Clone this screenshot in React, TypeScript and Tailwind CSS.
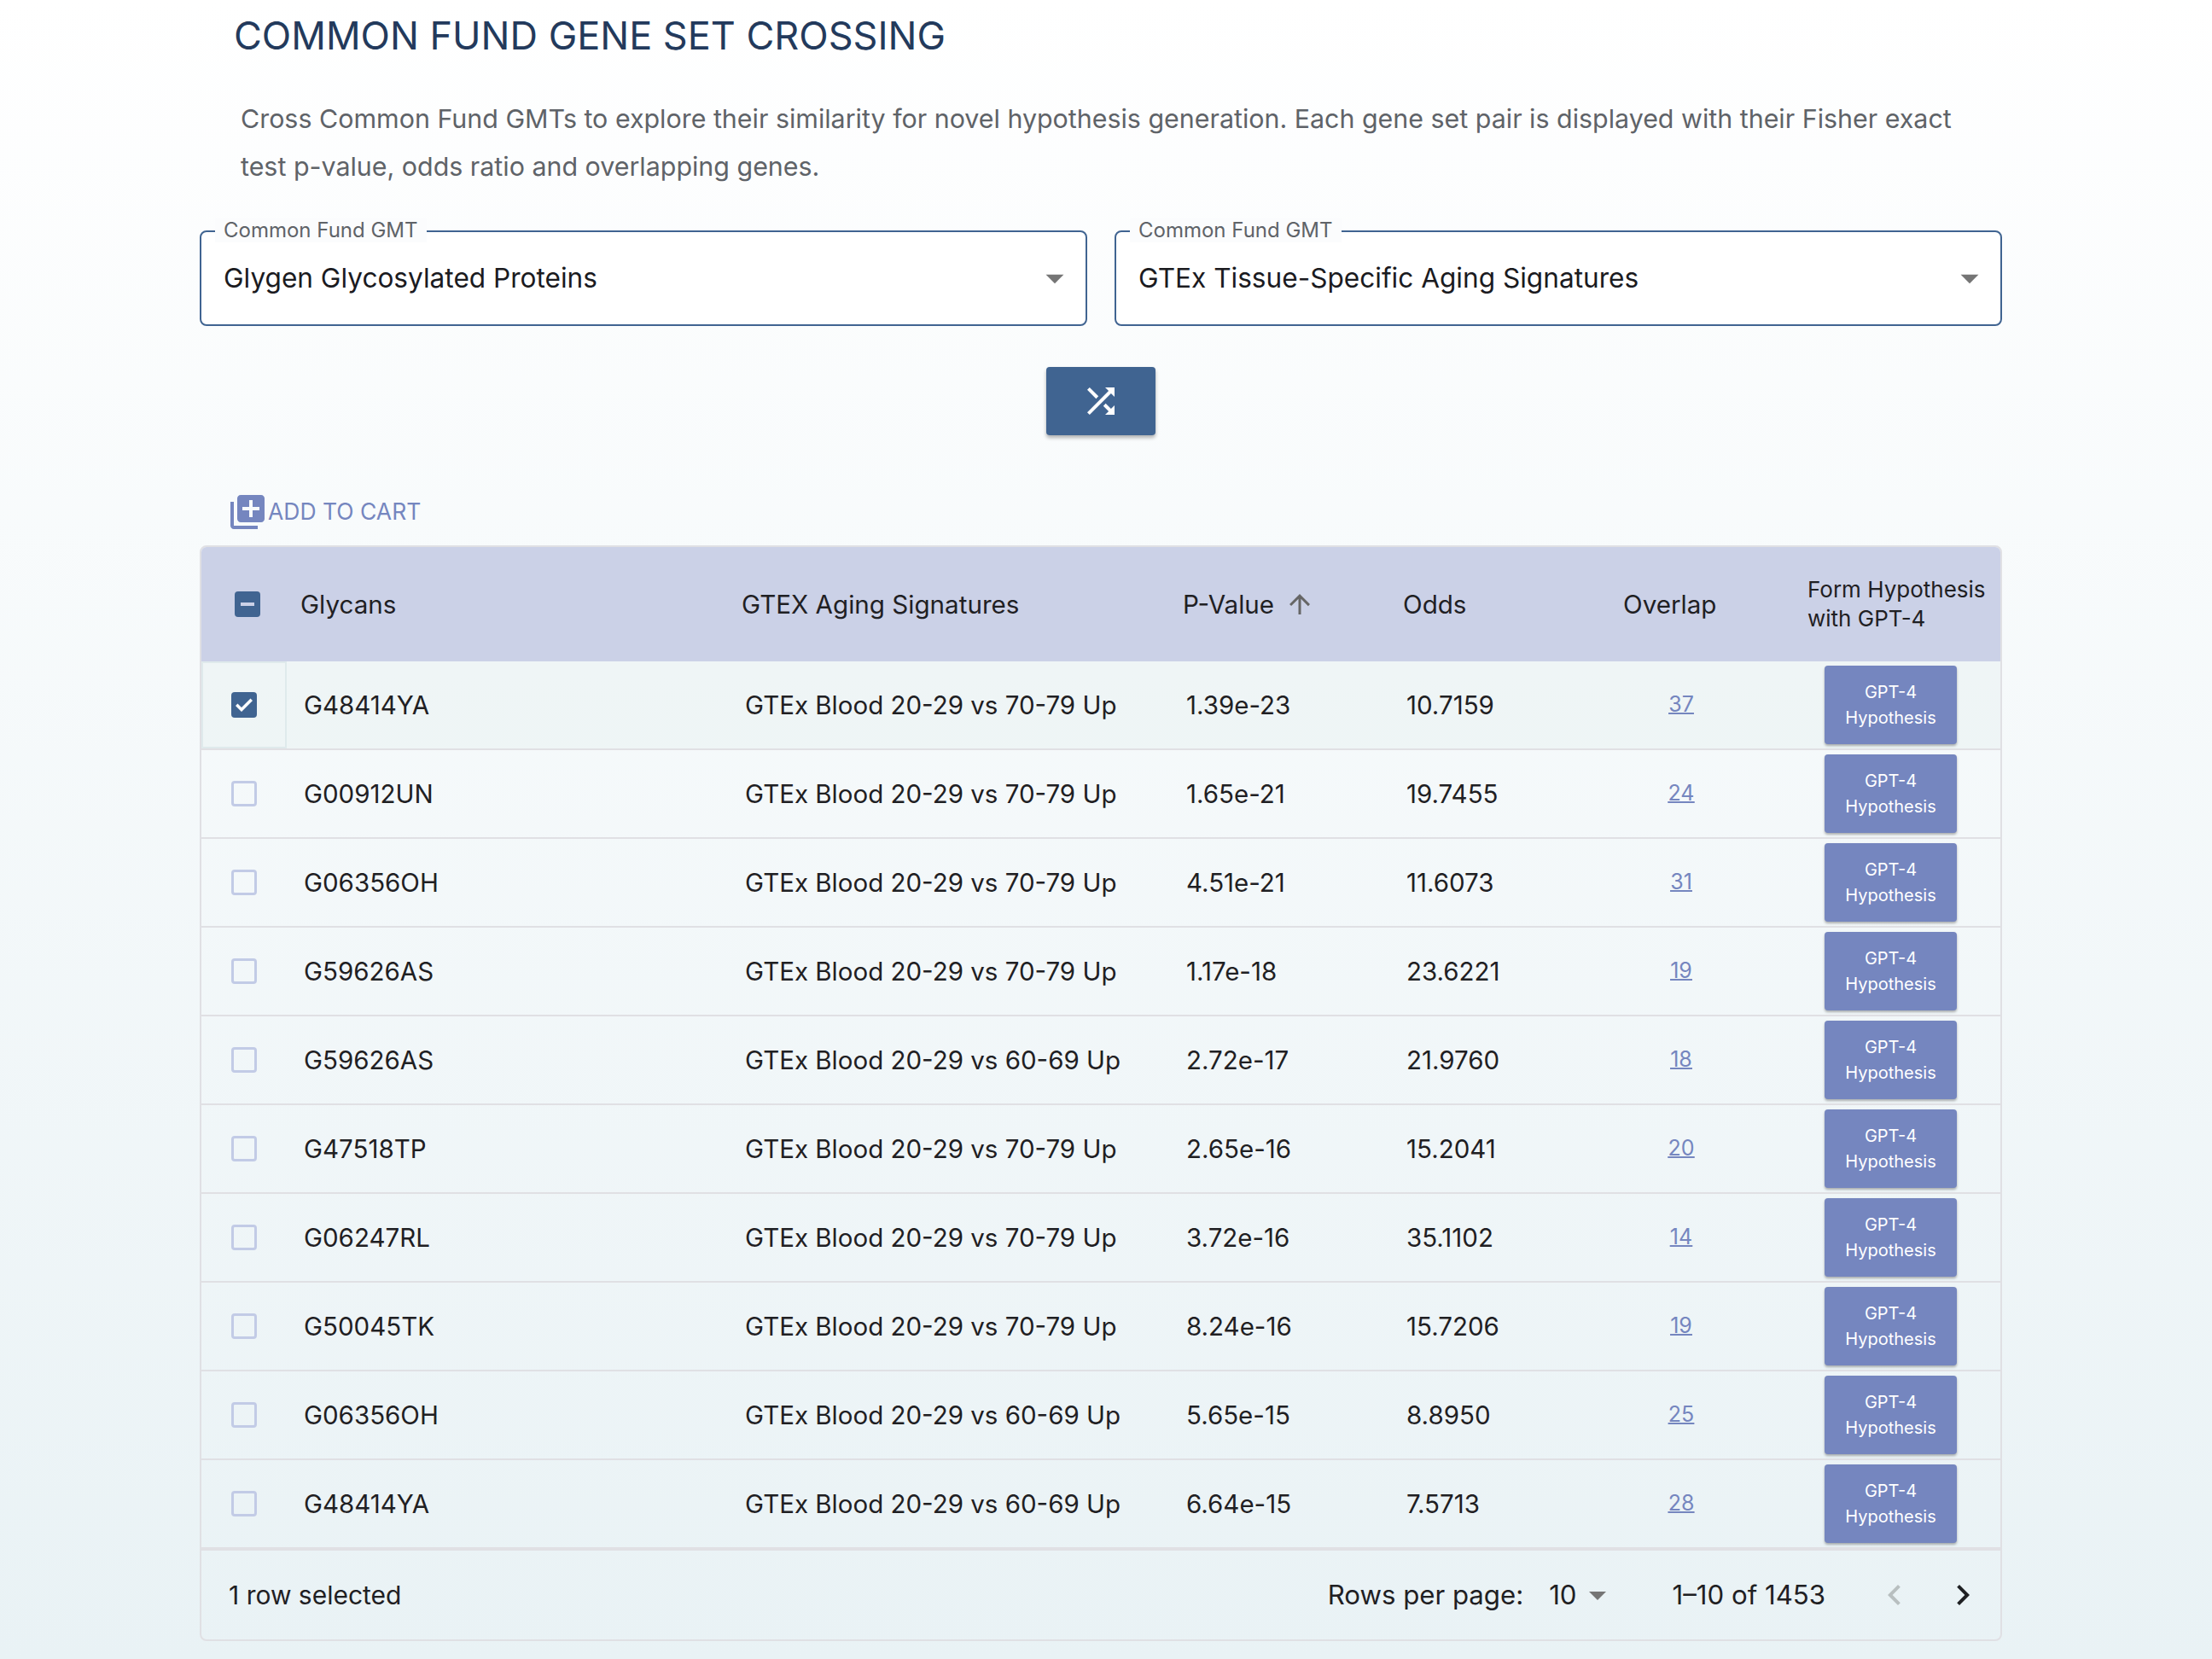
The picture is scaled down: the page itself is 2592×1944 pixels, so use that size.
import { ReactNode } from 'react';

interface Row {
  glycan: string;
  signature: string;
  pValue: string;
  odds: string;
  overlap: number;
  selected?: boolean;
}

const rows: Row[] = [
  { glycan: 'G48414YA', signature: 'GTEx Blood 20-29 vs 70-79 Up', pValue: '1.39e-23', odds: '10.7159', overlap: 37, selected: true },
  { glycan: 'G00912UN', signature: 'GTEx Blood 20-29 vs 70-79 Up', pValue: '1.65e-21', odds: '19.7455', overlap: 24 },
  { glycan: 'G06356OH', signature: 'GTEx Blood 20-29 vs 70-79 Up', pValue: '4.51e-21', odds: '11.6073', overlap: 31 },
  { glycan: 'G59626AS', signature: 'GTEx Blood 20-29 vs 70-79 Up', pValue: '1.17e-18', odds: '23.6221', overlap: 19 },
  { glycan: 'G59626AS', signature: 'GTEx Blood 20-29 vs 60-69 Up', pValue: '2.72e-17', odds: '21.9760', overlap: 18 },
  { glycan: 'G47518TP', signature: 'GTEx Blood 20-29 vs 70-79 Up', pValue: '2.65e-16', odds: '15.2041', overlap: 20 },
  { glycan: 'G06247RL', signature: 'GTEx Blood 20-29 vs 70-79 Up', pValue: '3.72e-16', odds: '35.1102', overlap: 14 },
  { glycan: 'G50045TK', signature: 'GTEx Blood 20-29 vs 70-79 Up', pValue: '8.24e-16', odds: '15.7206', overlap: 19 },
  { glycan: 'G06356OH', signature: 'GTEx Blood 20-29 vs 60-69 Up', pValue: '5.65e-15', odds: '8.8950', overlap: 25 },
  { glycan: 'G48414YA', signature: 'GTEx Blood 20-29 vs 60-69 Up', pValue: '6.64e-15', odds: '7.5713', overlap: 28 },
];

function Icon({ d, className }: { d: string; className: string }) {
  return (
    <svg viewBox="0 0 24 24" fill="currentColor" className={className}>
      <path d={d} />
    </svg>
  );
}

const dropDown = 'M7 10l5 5 5-5z';

function GmtSelect({ value }: { value: string }) {
  return (
    <div className="relative flex h-[112px] flex-1 items-center justify-between rounded-lg border-2 border-[#406491] bg-white pl-[26px] pr-[11px] text-[31.6px] text-[#1b1b1f]">
      <span className="absolute left-[16px] top-[-16px] bg-[#fbfcfd] px-[10px] text-[24px] leading-[28px] text-[#5f6368]">
        Common Fund GMT
      </span>
      <span>{value}</span>
      <Icon d={dropDown} className="h-[50px] w-[50px] text-[#757575]" />
    </div>
  );
}

function Cell({ className, children }: { className: string; children: ReactNode }) {
  return <div className={`flex items-center ${className}`}>{children}</div>;
}

function TableRow({ row }: { row: Row }) {
  return (
    <div className={`flex h-[104px] items-center border-b-2 border-[#e0e0e4] text-[29.5px] text-[#1f2023] ${row.selected ? 'bg-[#dfeaec]/30' : ''}`}>
      <Cell className={`h-full w-[100px] justify-center ${row.selected ? 'border-2 border-[#dfeaec]' : ''}`}>
        {row.selected ? (
          <span className="flex h-[30px] w-[30px] items-center justify-center rounded-[4px] bg-[#406491] text-white">
            <svg viewBox="0 0 24 24" className="h-[30px] w-[30px]" fill="currentColor">
              <path d="M9.6 18.4 4 12.8l2-2 3.6 3.6L18 6l2 2z" />
            </svg>
          </span>
        ) : (
          <span className="h-[30px] w-[30px] rounded-[4px] border-[3px] border-[#c2cbe6]" />
        )}
      </Cell>
      <Cell className="w-[517px] pl-[20px]">{row.glycan}</Cell>
      <Cell className="w-[517px] pl-[20px]">{row.signature}</Cell>
      <Cell className="w-[258px] pl-[20px]">{row.pValue}</Cell>
      <Cell className="w-[258px] pl-[20px]">{row.odds}</Cell>
      <Cell className="w-[168px] justify-center text-[25px] text-[#7586bf] underline decoration-2">
        <a href="#">{row.overlap}</a>
      </Cell>
      <Cell className="flex-1 pl-[84px]">
        <button className="h-[92px] w-[155px] rounded-[4px] bg-[#7586bf] text-[20px] leading-[30px] text-white shadow-[0_2px_3px_rgba(0,0,0,0.3)]">
          GPT-4
          <br />
          Hypothesis
        </button>
      </Cell>
    </div>
  );
}

export default function App() {
  return (
    <div
      className="min-h-[1944px] bg-gradient-to-b from-white to-[#e9f2f5] pl-[234px] pr-[246px]"
      style={{ fontFamily: 'Inter, "Liberation Sans", sans-serif' }}
    >
      <h1 className="pl-[40px] pt-[14px] text-[45px] uppercase leading-[56px] text-[#233a5c]">
        Common Fund Gene Set Crossing
      </h1>
      <p className="mb-[47px] ml-[48px] mt-[41px] w-[2050px] text-[30.4px] leading-[56px] text-[#5f6368]">
        Cross Common Fund GMTs to explore their similarity for novel hypothesis generation. Each gene set pair is displayed with their Fisher exact test p-value, odds ratio and overlapping genes.
      </p>

      <div className="flex gap-[32px]">
        <GmtSelect value="Glygen Glycosylated Proteins" />
        <GmtSelect value="GTEx Tissue-Specific Aging Signatures" />
      </div>

      <div className="mt-[48px] flex justify-center">
        <button className="flex h-[80px] w-[128px] items-center justify-center rounded-[4px] bg-[#406491] text-white shadow-[0_3px_4px_rgba(0,0,0,0.3)]">
          <Icon
            d="M10.59 9.17 5.41 4 4 5.41l5.17 5.17 1.42-1.41zM14.5 4l2.04 2.04L4 18.59 5.41 20 17.96 7.46 20 9.5V4h-5.5zm.33 9.41-1.41 1.41 3.13 3.13L14.5 20H20v-5.5l-2.04 2.04-3.13-3.13z"
            className="h-[48px] w-[48px]"
          />
        </button>
      </div>

      <div className="mb-[14px] ml-[32px] mt-[65px] flex h-[50px] items-center text-[26.5px] uppercase text-[#7586bf]">
        <Icon
          d="M4 6H2v14c0 1.1.9 2 2 2h14v-2H4V6zm16-4H8c-1.1 0-2 .9-2 2v12c0 1.1.9 2 2 2h12c1.1 0 2-.9 2-2V4c0-1.1-.9-2-2-2zm-1 9h-4v4h-2v-4H9V9h4V5h2v4h4v2z"
          className="h-[48px] w-[48px]"
        />
        <span>Add to cart</span>
      </div>

      <div className="overflow-hidden rounded-lg border-2 border-[#e0e0e4]">
        <div className="flex h-[134px] items-center bg-[#cbd1e7] text-[29.6px] text-[#1f2023]">
          <Cell className="h-full w-[108px] justify-center">
            <span className="flex h-[30px] w-[30px] items-center justify-center rounded-[4px] bg-[#406491]">
              <span className="h-[4px] w-[16px] bg-[#cbd1e7]" />
            </span>
          </Cell>
          <Cell className="w-[517px] pl-[8px]">Glycans</Cell>
          <Cell className="w-[517px] pl-[8px]">GTEX Aging Signatures</Cell>
          <Cell className="w-[258px] pl-[8px]">
            P-Value
            <Icon d="M4 12l1.41 1.41L11 7.83V20h2V7.83l5.58 5.59L20 12l-8-8-8 8z" className="ml-[12px] h-[36px] w-[36px] text-[#666]" />
          </Cell>
          <Cell className="w-[258px] pl-[8px]">Odds</Cell>
          <Cell className="w-[224px] pl-[8px]">Overlap</Cell>
          <Cell className="flex-1 text-[26px] leading-[34px]">
            <span>
              Form Hypothesis
              <br />
              with GPT-4
            </span>
          </Cell>
        </div>

        {rows.map((row, i) => (
          <TableRow key={i} row={row} />
        ))}

        <div className="flex h-[106px] items-center justify-between border-t-2 border-[#e0e0e4] pl-[32px] pr-[20px] text-[30px] text-[#1f2023]">
          <span>1 row selected</span>
          <div className="flex items-center text-[31.2px]">
            <span>Rows per page:</span>
            <span className="ml-[30px]">10</span>
            <Icon d={dropDown} className="h-[48px] w-[48px] text-[#757575]" />
            <span className="ml-[64px]">1–10 of 1453</span>
            <Icon d="M15.41 7.41 14 6l-6 6 6 6 1.41-1.41L10.83 12z" className="ml-[57px] h-[48px] w-[48px] text-[#b8bfc0]" />
            <Icon d="M10 6 8.59 7.41 13.17 12l-4.58 4.59L10 18l6-6z" className="ml-[32px] h-[48px] w-[48px]" />
          </div>
        </div>
      </div>
    </div>
  );
}
